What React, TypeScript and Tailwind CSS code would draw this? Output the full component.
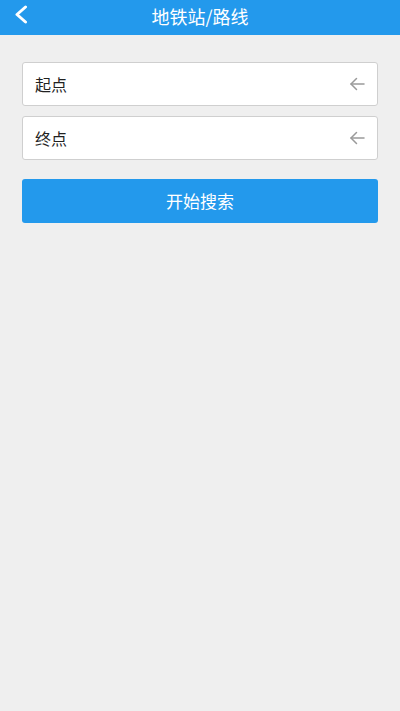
import React from "react";

const font = { fontFamily: '"Noto Sans CJK SC", "Noto Sans", sans-serif' };

function ArrowLeft() {
  return (
    <svg width="16" height="14" viewBox="0 0 16 14" fill="none" stroke="#9a9a9a" strokeWidth="1.5" strokeLinecap="round" strokeLinejoin="round">
      <path d="M15 7H2" />
      <path d="M7.5 1.5L2 7l5.5 5.5" />
    </svg>
  );
}

export default function App() {
  return (
    <div className="w-[400px] h-[711px] bg-[#efefef] flex flex-col" style={font}>
      <div className="h-[35px] bg-[#2399ec] relative flex items-center justify-center shrink-0 pb-[4px]">
        <div className="absolute left-[14px] top-[5px]">
          <svg width="14" height="19" viewBox="0 0 14 19" fill="none" stroke="white" strokeWidth="3" strokeLinecap="round" strokeLinejoin="round">
            <path d="M11.5 2L3 9.5l8.5 7.5" />
          </svg>
        </div>
        <span className="text-white text-[18px] leading-none">地铁站/路线</span>
      </div>
      <div className="px-[22px] pt-[27px] flex flex-col">
        <div className="h-[44px] bg-white border border-[#cfcfcf] rounded-[3px] flex items-center justify-between pl-[12px] pr-[12px]">
          <span className="text-[16px] text-[#222]">起点</span>
          <ArrowLeft />
        </div>
        <div className="h-[44px] mt-[10px] bg-white border border-[#cfcfcf] rounded-[3px] flex items-center justify-between pl-[12px] pr-[12px]">
          <span className="text-[16px] text-[#222]">终点</span>
          <ArrowLeft />
        </div>
        <div className="h-[44px] mt-[19px] bg-[#2399ec] rounded-[3px] flex items-center justify-center">
          <span className="text-[17px] text-white">开始搜索</span>
        </div>
      </div>
    </div>
  );
}
